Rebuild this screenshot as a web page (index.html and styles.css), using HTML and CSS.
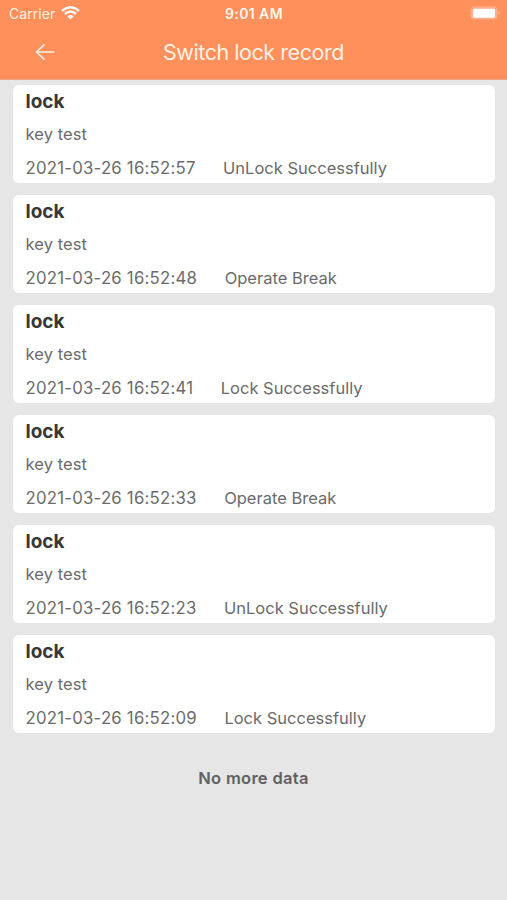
FILE: index.html
```html
<!DOCTYPE html>
<html lang="en">
<head>
<meta charset="utf-8">
<title>Switch lock record</title>
<link rel="stylesheet" href="styles.css">
</head>
<body>
<header class="header">
  <div class="status">
    <div class="carrier"><span class="carrier-name">Carrier</span>
      <svg class="wifi" width="19" height="14" viewBox="0 0 19 14"><path d="M1 4.800Q9.500-2.400 18 4.800M3.900 8Q9.500 3.200 15.100 8" fill="none" stroke="#fff" stroke-width="2.400"/><path d="M6.300 10.200Q9.500 7.600 12.700 10.200L9.500 13.500Z" fill="#fff"/></svg>
    </div>
    <span class="clock">9:01 AM</span>
    <div class="power"><svg width="31" height="14" viewBox="0 0 31 14"><rect x="0.500" y="0.500" width="27" height="13" rx="4" fill="#fff" fill-opacity=".28"/><rect x="3" y="2.700" width="22" height="9" rx="1.500" fill="#fff"/><path d="M28.300 5Q30 5.500 30 7Q30 8.500 28.300 9Z" fill="#fff" opacity=".4"/></svg></div>
  </div>
  <div class="nav">
    <svg class="back" width="20" height="18" viewBox="0 0 20 18"><path d="M19.500 9H1.500M9.500 1.300L1.500 9L9.500 16.700" fill="none" stroke="#fff1e2" stroke-width="1.600"/></svg>
    <h1 class="title">Switch lock record</h1>
  </div>
</header>
<main class="records">
  <article class="card"><h2 class="name">lock</h2><p class="key">key test</p><p class="event"><span class="time">2021-03-26 16:52:57</span><span class="result">UnLock Successfully</span></p></article>
  <article class="card"><h2 class="name">lock</h2><p class="key">key test</p><p class="event"><span class="time">2021-03-26 16:52:48</span><span class="result">Operate Break</span></p></article>
  <article class="card"><h2 class="name">lock</h2><p class="key">key test</p><p class="event"><span class="time">2021-03-26 16:52:41</span><span class="result">Lock Successfully</span></p></article>
  <article class="card"><h2 class="name">lock</h2><p class="key">key test</p><p class="event"><span class="time">2021-03-26 16:52:33</span><span class="result">Operate Break</span></p></article>
  <article class="card"><h2 class="name">lock</h2><p class="key">key test</p><p class="event"><span class="time">2021-03-26 16:52:23</span><span class="result">UnLock Successfully</span></p></article>
  <article class="card"><h2 class="name">lock</h2><p class="key">key test</p><p class="event"><span class="time">2021-03-26 16:52:09</span><span class="result">Lock Successfully</span></p></article>
</main>
<p class="end">No more data</p>
</body>
</html>
```
FILE: styles.css
```css
* { box-sizing: border-box; }
body, h1, h2, p { margin: 0; }
body { min-height: 900px; background: #e6e6e6; color: #6b6b6b; font-family: Inter, sans-serif; }
.header { height: 80px; background: #ff8f5b; border-bottom: 1px solid #efa582; color: #fff; }
.status { display: grid; grid-template-columns: 1fr auto 1fr; align-items: center; height: 27px; padding: 0 6px 0 9px; font-size: 14px; }
.carrier { display: flex; align-items: center; gap: 6px; }
.carrier-name { color: #fff1e2; letter-spacing: 0.060px; }
.wifi { margin-top: -2px; }
.clock { font-weight: 600; font-size: 14px; letter-spacing: 0.400px; margin-right: 2px; color: #fff6ec; }
.power { display: flex; justify-content: flex-end; margin-top: -1px; }
.nav { display: grid; grid-template-columns: 55px 1fr 55px; align-items: center; height: 50px; }
.back { margin-left: 35px; }
.title { font-size: 21.500px; font-weight: 400; letter-spacing: -0.450px; text-align: center; color: #fff1e2; }
.records { display: grid; gap: 12px; padding: 5px 12px 0 13px; }
.card { height: 98px; padding: 2px 12px 0 12.500px; background: #fff; border-radius: 6px; }
.name { height: 29px; line-height: 29px; font-size: 19px; font-weight: 700; color: #373737; }
.key { height: 35px; line-height: 37px; font-size: 16.500px; letter-spacing: 0.080px; }
.event { display: flex; gap: 27.500px; height: 34px; line-height: 34px; font-size: 16.500px; white-space: nowrap; }
.time { font-size: 16.800px; letter-spacing: 0.210px; }
.end { margin-top: 33px; line-height: 24px; text-align: center; font-size: 16.500px; font-weight: 600; letter-spacing: 0.300px; color: #606060; }
```
